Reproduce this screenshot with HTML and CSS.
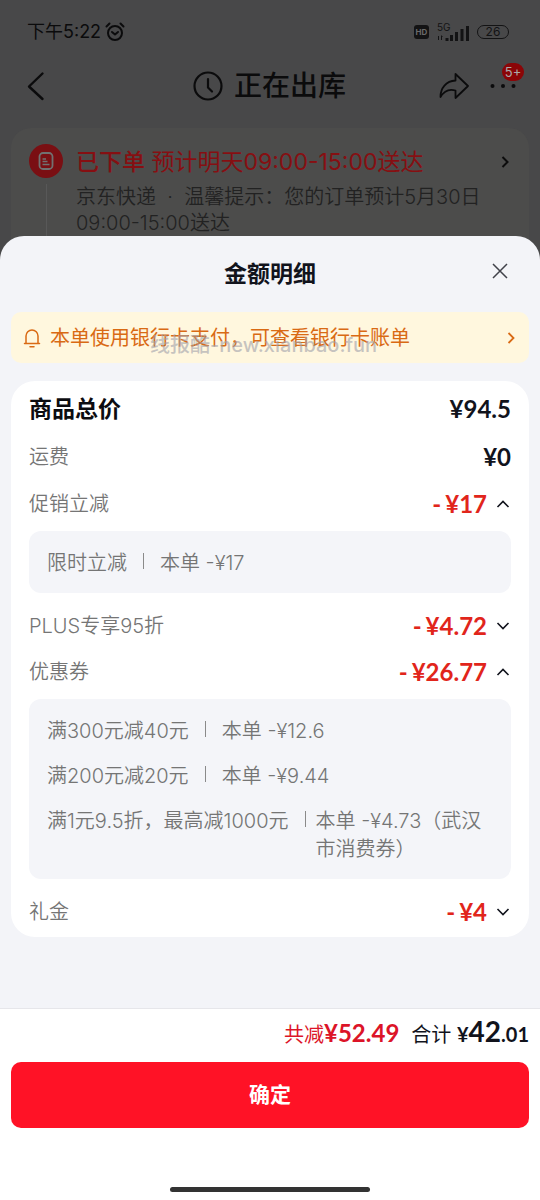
FILE: index.html
```html
<!DOCTYPE html>
<html lang="zh-CN">
<head>
<meta charset="utf-8">
<meta name="viewport" content="width=device-width, initial-scale=1">
<title>金额明细</title>
<link rel="stylesheet" href="styles.css">
</head>
<body>
<div class="backdrop">
  <div class="status">
    <span class="clock">下午5:22</span>
    <svg class="alarm" width="20" height="20" viewBox="0 0 20 20" fill="none" stroke="currentColor" stroke-width="2" stroke-linecap="round" stroke-linejoin="round"><circle cx="10" cy="11" r="7"/><path d="M7 10l3 2.500 3-2.500M1.500 4.500l3-3M18.500 4.500l-3-3"/></svg>
    <div class="signals">
      <span class="hd">HD</span>
      <span class="net">
        <span class="gen">5G</span>
        <svg width="32" height="16" viewBox="0 0 32 16" fill="currentColor"><path d="M1 11h1v4H1zM4 10l2 2H5v3H4zM8.500 13h3v3h-3zM13 10h3v6h-3zM18 7h3v9h-3zM23.500 4h3v12h-3zM29 1h3v15h-3z"/></svg>
      </span>
      <span class="battery">26</span>
    </div>
  </div>
  <header class="nav">
    <button class="icon-btn" aria-label="返回"><svg width="18" height="30" viewBox="0 0 18 30" fill="none" stroke="currentColor" stroke-width="2.400" stroke-linecap="round" stroke-linejoin="round"><path d="M15.500 2.500L2 15.500l13.500 12.500"/></svg></button>
    <h1 class="nav-title"><svg width="30" height="30" viewBox="0 0 30 30" fill="none" stroke="currentColor" stroke-width="2.200" stroke-linecap="round" stroke-linejoin="round"><circle cx="15" cy="15" r="13.500"/><path d="M15 8v8.500l4 4"/></svg>正在出库</h1>
    <div class="nav-actions">
      <button class="icon-btn" aria-label="分享"><svg width="30" height="28" viewBox="0 0 30 28" fill="none" stroke="currentColor" stroke-width="1.800" stroke-linejoin="round"><path d="M16.500 2L29 14 16.500 26v-7.500C10 16.500 5 19 1.500 25 1.500 16 7 9 16.500 8.500z"/></svg></button>
      <button class="icon-btn more" aria-label="更多"><svg width="26" height="6" viewBox="0 0 26 6" fill="currentColor"><circle cx="2.500" cy="3" r="2"/><circle cx="13" cy="3" r="2"/><circle cx="23.500" cy="3" r="2"/></svg><span class="badge">5+</span></button>
    </div>
  </header>
  <section class="order">
    <div class="rail">
      <svg width="34" height="34" viewBox="0 0 34 34" fill="none"><circle cx="17" cy="17" r="17" fill="#7a0f13"/><rect x="10.500" y="9" width="13" height="16" rx="3.500" stroke="#717171" stroke-width="1.800"/><path d="M13.500 15h3.500M13.500 17.500h5M13.500 20.500h7" stroke="#717171" stroke-width="1.500"/></svg>
    </div>
    <div class="order-main">
      <div class="order-head"><p class="order-title"><b>已下单</b> 预计明天09:00-15:00送达</p>
        <svg width="8" height="14" viewBox="0 0 8 14" fill="none" stroke="#0c0c0c" stroke-width="2"><path d="M1.500 2l5 5-5 5"/></svg></div>
      <p class="order-note">京东快递&nbsp; ·&nbsp; 温馨提示：您的订单预计5月30日09:00-15:00送达</p>
    </div>
  </section>
</div>

<main class="sheet">
  <div class="sheet-head">
    <h2>金额明细</h2>
    <button class="close" aria-label="关闭"><svg width="16" height="16" viewBox="0 0 16 16" fill="none" stroke="currentColor" stroke-width="1.500"><path d="M1 1l14 14M15 1L1 15"/></svg></button>
  </div>
  <a class="notice" href="#">
    <svg width="18" height="20" viewBox="0 0 18 20" fill="none" stroke="currentColor" stroke-width="1.500" stroke-linecap="round" stroke-linejoin="round"><path d="M3 15V8a6 6 0 0 1 12 0v7M1.500 15.500h15M7 18.700h4"/></svg>
    <span class="notice-text">本单使用银行卡支付，可查看银行卡账单</span>
    <svg width="8" height="14" viewBox="0 0 8 14" fill="none" stroke="currentColor" stroke-width="1.800"><path d="M1.500 2l5 5-5 5"/></svg>
    <span class="watermark">线报酷-new.xianbao.fun</span>
  </a>
  <section class="bill">
    <div class="row total"><span>商品总价</span><strong>¥94.5</strong></div>
    <div class="row"><span>运费</span><strong>¥0</strong></div>
    <button class="row off" aria-expanded="true"><span>促销立减</span><strong><i>-</i>¥17</strong><svg class="caret" viewBox="0 0 14 8"><path d="M1.500 7L7 1.500 12.500 7"/></svg></button>
    <ul class="detail">
      <li><span>限时立减</span><span class="bar"></span><span class="amount">本单 -¥17</span></li>
    </ul>
    <button class="row off" aria-expanded="false"><span>PLUS专享95折</span><strong><i>-</i>¥4.72</strong><svg class="caret" viewBox="0 0 14 8"><path d="M1.500 1L7 6.500 12.500 1"/></svg></button>
    <button class="row off" aria-expanded="true"><span>优惠券</span><strong><i>-</i>¥26.77</strong><svg class="caret" viewBox="0 0 14 8"><path d="M1.500 7L7 1.500 12.500 7"/></svg></button>
    <ul class="detail">
      <li><span>满300元减40元</span><span class="bar"></span><span class="amount">本单 -¥12.6</span></li>
      <li><span>满200元减20元</span><span class="bar"></span><span class="amount">本单 -¥9.44</span></li>
      <li class="tight"><span>满1元9.5折，最高减1000元</span><span class="bar"></span><span class="amount">本单 -¥4.73（武汉市消费券）</span></li>
    </ul>
    <button class="row off" aria-expanded="false"><span>礼金</span><strong><i>-</i>¥4</strong><svg class="caret" viewBox="0 0 14 8"><path d="M1.500 1L7 6.500 12.500 1"/></svg></button>
  </section>
</main>

<footer class="footer">
  <p class="sum"><span class="saved">共减<b>¥52.49</b></span><span class="due">合计 <b class="yen">¥</b><b class="big">42</b><b class="cents">.01</b></span></p>
  <button class="confirm">确定</button>
  <div class="home-bar"></div>
</footer>
</body>
</html>
```
FILE: styles.css
```css
* { box-sizing: border-box; }
body, h1, h2, p, ul { margin: 0; padding: 0; }
body {
  min-height: 100vh;
  display: flex;
  flex-direction: column;
  background: #484849;
  color: #11131c;
  font-family: Inter, "Noto Sans CJK SC", sans-serif;
  font-size: 20px;
  line-height: 28px;
}
button {
  font: inherit;
  color: inherit;
  background: none;
  border: 0;
  padding: 0;
  text-align: left;
}
svg { display: block; flex: none; }

/* dimmed order page */
.backdrop { color: #0b0b0c; }
.status {
  display: flex;
  align-items: center;
  height: 48px;
  margin-top: 8px;
  padding: 0 31px 0 27px;
  font-size: 18px;
}
.alarm { margin-left: 4px; }
.signals { display: flex; align-items: center; gap: 8px; margin-left: auto; color: #131314; }
.hd {
  width: 15px;
  border-radius: 3px;
  background: #131314;
  color: #6a6a6a;
  font-size: 8px;
  font-weight: 700;
  line-height: 14px;
  text-align: center;
}
.net { position: relative; padding-top: 1px; }
.gen { position: absolute; left: 0; top: -2px; font-size: 10px; line-height: 10px; }
.battery {
  width: 32px;
  border: 1px solid #131314;
  border-radius: 8px;
  font-size: 12px;
  line-height: 12px;
  text-align: center;
}
.nav {
  display: grid;
  grid-template-columns: 1fr auto 1fr;
  align-items: center;
  height: 60px;
  padding: 0 24px 0 27px;
}
.nav-title { display: flex; align-items: center; gap: 11px; padding-right: 4px; font-size: 28px; font-weight: 500; }
.nav-actions { display: flex; align-items: center; justify-content: flex-end; gap: 21px; }
.more { position: relative; }
.badge {
  position: absolute;
  right: -8px;
  bottom: 8px;
  width: 22px;
  border-radius: 9px;
  background: #8b0507;
  color: #aaa;
  font-size: 13px;
  line-height: 18px;
  text-align: center;
}
.order {
  display: flex;
  gap: 13px;
  margin: 12px 11px 0;
  padding: 16px 18px 32px;
  border-radius: 20px 20px 0 0;
  background: #4c4c4b;
}
.rail { display: flex; flex-direction: column; align-items: center; }
.rail::after { content: ""; flex: 1; width: 1px; margin-top: 6px; background: #585858; }
.order-main { flex: 1; }
.order-head { display: flex; align-items: center; justify-content: space-between; padding-right: 2px; }
.order-title { color: #860f12; font-size: 23px; line-height: 36px; }
.order-title b { font-weight: 500; }
.order-note { color: #222; font-weight: 350; line-height: 26px; margin-top: 4px; }

/* bottom sheet */
.sheet {
  flex: 1;
  margin-top: -32px;
  padding: 0 11px 24px;
  border-radius: 24px 24px 0 0;
  background: #f3f4f8;
}
.sheet-head {
  display: grid;
  grid-template-columns: 1fr auto 1fr;
  align-items: center;
  height: 76px;
  padding: 0 21px;
}
.sheet-head h2 { grid-column: 2; font-size: 23px; font-weight: 700; }
.close { justify-self: end; color: #40424a; padding-bottom: 6px; }
.notice {
  position: relative;
  display: flex;
  align-items: center;
  gap: 9px;
  height: 51px;
  padding: 0 14px 0 12px;
  border-radius: 10px;
  background: #fff7de;
  color: #d96a14;
  text-decoration: none;
}
.notice-text { flex: 1; }
.watermark {
  position: absolute;
  left: 139px;
  top: 20px;
  color: rgba(160, 160, 170, .6);
  font-size: 20px;
  line-height: 26px;
  font-weight: 500;
}
.bill { margin-top: 18px; padding: 4px 18px 2px; border-radius: 24px; background: #fff; }
.row { display: flex; align-items: center; width: 100%; height: 48px; color: #757575; font-weight: 350; }
.row.off { height: 46px; }
.row strong {
  margin-left: auto;
  color: #11131c;
  font-family: Lato, "Noto Sans CJK SC", sans-serif;
  font-size: 24px;
  font-weight: 700;
}
.row.off strong { color: #e1251b; }
.row i { margin-right: 4px; font-style: normal; }
.row.total span { color: #0c0c10; font-size: 23px; font-weight: 700; }
.caret {
  width: 14px;
  height: 8px;
  margin: 0 1px 0 9px;
  fill: none;
  stroke: #11131c;
  stroke-width: 1.6;
}
.detail {
  display: grid;
  gap: 17px;
  margin: 4px 0 10px;
  padding: 18px 18px 16px;
  border-radius: 12px;
  background: #f4f5f9;
  color: #757575;
  font-weight: 350;
  list-style: none;
}
.detail li { display: flex; }
.detail li > span:first-child { flex: none; }
.bar { flex: none; width: 1px; height: 16px; margin: 4px 16px; background: #8a8a8a; }
.tight .bar { margin-right: 10px; }

/* checkout bar */
.footer { padding: 8px 11px; border-top: 1px solid #e6e6ea; background: #fff; }
.sum { display: flex; align-items: baseline; justify-content: flex-end; gap: 12px; height: 30px; }
.sum b { font-family: Lato, sans-serif; font-weight: 700; font-size: 24px; }
.saved { color: #dc1428; }
.sum .yen, .sum .cents { font-size: 20px; }
.sum .big { font-size: 28px; }
.confirm {
  display: block;
  width: 100%;
  height: 66px;
  margin-top: 15px;
  border-radius: 10px;
  background: #ff1226;
  color: #fff;
  font-size: 21px;
  font-weight: 700;
  text-align: center;
}
.home-bar { width: 200px; height: 5px; margin: 59px auto 0; border-radius: 3px; background: #333; }
```
